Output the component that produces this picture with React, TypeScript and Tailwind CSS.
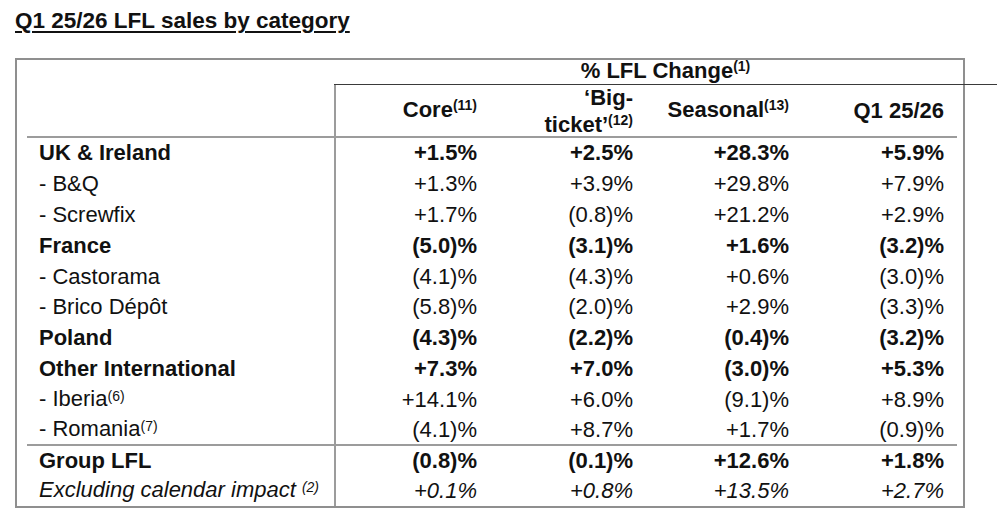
import React from "react";

type Row = {
  label: string;
  sup?: string;
  bold?: boolean;
  italic?: boolean;
  values: string[];
};

const regions: Row[] = [
  { label: "UK & Ireland", bold: true, values: ["+1.5%", "+2.5%", "+28.3%", "+5.9%"] },
  { label: "- B&Q", values: ["+1.3%", "+3.9%", "+29.8%", "+7.9%"] },
  { label: "- Screwfix", values: ["+1.7%", "(0.8)%", "+21.2%", "+2.9%"] },
  { label: "France", bold: true, values: ["(5.0)%", "(3.1)%", "+1.6%", "(3.2)%"] },
  { label: "- Castorama", values: ["(4.1)%", "(4.3)%", "+0.6%", "(3.0)%"] },
  { label: "- Brico Dépôt", values: ["(5.8)%", "(2.0)%", "+2.9%", "(3.3)%"] },
  { label: "Poland", bold: true, values: ["(4.3)%", "(2.2)%", "(0.4)%", "(3.2)%"] },
  { label: "Other International", bold: true, values: ["+7.3%", "+7.0%", "(3.0)%", "+5.3%"] },
  { label: "- Iberia", sup: "(6)", values: ["+14.1%", "+6.0%", "(9.1)%", "+8.9%"] },
  { label: "- Romania", sup: "(7)", values: ["(4.1)%", "+8.7%", "+1.7%", "(0.9)%"] },
];

const totals: Row[] = [
  { label: "Group LFL", bold: true, values: ["(0.8)%", "(0.1)%", "+12.6%", "+1.8%"] },
  { label: "Excluding calendar impact ", sup: "(2)", italic: true, values: ["+0.1%", "+0.8%", "+13.5%", "+2.7%"] },
];

// column widths, right padding puts the figures where the slide has them
const cols = ["w-[154px] pr-[13px]", "w-[155px] pr-[12px]", "w-[157px] pr-[13px]", "w-[155px] pr-[13px]"];

function Sup({ children, raise = "top-[-7px]" }: { children: React.ReactNode; raise?: string }) {
  return <span className={`relative ${raise} text-[14px] align-baseline`}>{children}</span>;
}

function DataRow({ row, height, last }: { row: Row; height: string; last?: boolean }) {
  const weight = row.bold ? "font-bold" : row.italic ? "italic" : "";
  const line = last ? "border-b-2 border-[#9c9c9c]" : "";
  return (
    <div className={`flex ${height}`}>
      <div className="w-[317px] shrink-0">
        <div className={`ml-[10px] pl-[12px] h-full flex items-center ${line} ${weight}`}>
          <span>
            {row.label}
            {row.sup && <Sup raise="top-[-5px]">{row.sup}</Sup>}
          </span>
        </div>
      </div>
      <div className={`flex border-l-2 border-[#9c9c9c] ${line}`}>
        {row.values.map((v, i) => (
          <div key={i} className={`${cols[i]} flex items-center justify-end ${weight}`}>
            {v}
          </div>
        ))}
      </div>
    </div>
  );
}

export default function App() {
  return (
    <div
      className="w-[1000px] h-[527px] bg-white text-[#111] pl-[15px] pt-[8px] overflow-hidden"
      style={{ fontFamily: '"Liberation Sans", Arial, sans-serif' }}
    >
      <h1 className="text-[22.5px] leading-[26px] font-bold underline decoration-2 underline-offset-[3px]">
        Q1 25/26 LFL sales by category
      </h1>

      <div className="mt-[24px] w-[950px] border-2 border-[#8f8f8f] text-[22px] leading-[26px]">
        {/* header row 1 */}
        <div className="flex h-[25px]">
          <div className="w-[317px] shrink-0" />
          <div className="w-[663px] shrink-0 border-b border-[#3a3a3a] font-bold flex items-center justify-center">
            <span>
              % LFL Change<Sup>(1)</Sup>
            </span>
          </div>
        </div>

        {/* header row 2 */}
        <div className="flex h-[53px]">
          <div className="w-[317px] shrink-0">
            <div className="ml-[10px] h-full border-b-2 border-[#9c9c9c]" />
          </div>
          <div className="flex border-l-2 border-b-2 border-[#9c9c9c] font-bold">
            <div className={`${cols[0]} flex items-center justify-end`}>
              <span>
                Core<Sup>(11)</Sup>
              </span>
            </div>
            <div className={`${cols[1]} flex flex-col items-end justify-center pt-[3px] leading-[27px]`}>
              <span>‘Big-</span>
              <span>
                ticket’<Sup>(12)</Sup>
              </span>
            </div>
            <div className={`${cols[2]} flex items-center justify-end`}>
              <span>
                Seasonal<Sup>(13)</Sup>
              </span>
            </div>
            <div className={`${cols[3]} flex items-center justify-end`}>Q1 25/26</div>
          </div>
        </div>

        {regions.map((r, i) => (
          <DataRow key={r.label} row={r} height="h-[30.8px]" last={i === regions.length - 1} />
        ))}
        {totals.map((r) => (
          <DataRow key={r.label} row={r} height="h-[30px]" />
        ))}
      </div>
    </div>
  );
}
